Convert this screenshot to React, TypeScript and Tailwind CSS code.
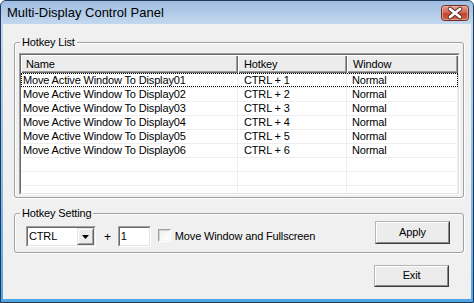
import React from 'react';

// Rows shown in the hotkey list
const rows = [
  { name: 'Move Active Window To Display01', hotkey: 'CTRL + 1', mode: 'Normal' },
  { name: 'Move Active Window To Display02', hotkey: 'CTRL + 2', mode: 'Normal' },
  { name: 'Move Active Window To Display03', hotkey: 'CTRL + 3', mode: 'Normal' },
  { name: 'Move Active Window To Display04', hotkey: 'CTRL + 4', mode: 'Normal' },
  { name: 'Move Active Window To Display05', hotkey: 'CTRL + 5', mode: 'Normal' },
  { name: 'Move Active Window To Display06', hotkey: 'CTRL + 6', mode: 'Normal' },
  { name: '', hotkey: '', mode: '' },
  { name: '', hotkey: '', mode: '' },
  { name: '', hotkey: '', mode: '' },
];

function CloseButton() {
  return (
    <svg width="28" height="16" viewBox="0 0 28 16" className="mt-[4px] shrink-0">
      <defs>
        <linearGradient id="closeRed" x1="0" y1="0" x2="0" y2="1">
          <stop offset="0" stopColor="#e8a493" />
          <stop offset="0.45" stopColor="#d26a55" />
          <stop offset="0.55" stopColor="#c2442c" />
          <stop offset="1" stopColor="#cc6a4f" />
        </linearGradient>
      </defs>
      <rect x="0.5" y="0.5" width="27" height="15" rx="3" fill="url(#closeRed)" stroke="#6b2a22" />
      <rect x="1.5" y="1.5" width="25" height="13" rx="2" fill="none" stroke="#f2c4b8" strokeOpacity="0.6" />
      <path d="M9 4 L19 12 M19 4 L9 12" stroke="#5a2a24" strokeWidth="4.6" strokeLinecap="round" />
      <path d="M9 4 L19 12 M19 4 L9 12" stroke="#ffffff" strokeWidth="2.8" strokeLinecap="round" />
    </svg>
  );
}

// Classic sunken 3D border
function Sunken({ className, children }: { className?: string; children?: React.ReactNode }) {
  return (
    <div className={`border border-t-[#a0a0a0] border-l-[#a0a0a0] border-r-white border-b-white ${className ?? ''}`}>
      <div className="w-full h-full border border-t-[#696969] border-l-[#696969] border-r-[#e3e3e3] border-b-[#e3e3e3] bg-white overflow-hidden">
        {children}
      </div>
    </div>
  );
}

function PushButton({ label, className }: { label: string; className?: string }) {
  return (
    <div className={`w-[75px] border border-t-[#b4b4b4] border-l-[#b4b4b4] border-r-[#3c3c3c] border-b-[#3c3c3c] ${className ?? ''}`}>
      <div className="w-full h-full border border-t-white border-l-white border-r-[#8a8a8a] border-b-[#8a8a8a] bg-[#ececec] flex items-center justify-center pb-[1px]">
        {label}
      </div>
    </div>
  );
}

export default function App() {
  return (
    <div className="w-[474px] h-[303px] bg-white font-['Liberation_Sans',Arial,sans-serif] text-[11px] tracking-[-0.15px] text-black">
      <div className="w-full h-full flex flex-col rounded-t-[6px] border border-[#1e3a58] bg-[#4ea6e6] overflow-hidden">
        {/* Title bar */}
        <div className="h-[23px] shrink-0 flex justify-between bg-gradient-to-b from-[#9fbde1] to-[#c3d8ef] pl-[6px] pr-[4px]">
          <span className="self-center text-[13px] leading-[16px] tracking-normal">Multi-Display Control Panel</span>
          <CloseButton />
        </div>

        {/* Client area */}
        <div className="flex-1 flex px-[2px] pb-[3px] bg-gradient-to-b from-[#c3d8ef] to-[#4ea6e6]">
          <div className="flex-1 bg-[#f0f0f0] pt-[12px]">
            {/* Hotkey List group */}
            <fieldset className="ml-[11px] w-[450px] border border-[#a0a0a0] rounded-[3px] pl-[4px] pb-[2px] shadow-[inset_1px_1px_0_#ffffff,1px_1px_0_#ffffff]">
              <legend className="ml-[1px] px-[2px] leading-[13px] bg-[#f0f0f0]">Hotkey List</legend>
              <Sunken className="mt-[4px] w-[441px] h-[142px]">
                {/* Header */}
                <div className="flex h-[18px] bg-[#ececec]">
                  {[
                    { t: 'Name', w: 'w-[217px]', p: 'pl-[4px]' },
                    { t: 'Hotkey', w: 'w-[109px]', p: 'pl-[5px]' },
                    { t: 'Window', w: 'w-[111px]', p: 'pl-[5px]' },
                  ].map((h) => (
                    <div
                      key={h.t}
                      className={`${h.w} ${h.p} shrink-0 flex items-center border-t border-l border-white shadow-[inset_-1px_-1px_0_#696969,inset_-2px_-2px_0_#a0a0a0]`}
                    >
                      {h.t}
                    </div>
                  ))}
                </div>
                {/* Rows */}
                {rows.map((r, i) => (
                  <div
                    key={i}
                    className={`flex h-[14px] border-t border-[#eeeeee] leading-[13px] ${i === 0 ? 'outline-1 outline-dotted outline-black -outline-offset-1' : ''}`}
                  >
                    <div className="w-[217px] shrink-0 pl-[2px] border-r border-[#eeeeee] whitespace-nowrap">{r.name}</div>
                    <div className="w-[109px] shrink-0 pl-[6px] border-r border-[#eeeeee]">{r.hotkey}</div>
                    <div className="w-[111px] shrink-0 pl-[5px] border-r border-[#eeeeee]">{r.mode}</div>
                  </div>
                ))}
              </Sunken>
            </fieldset>

            {/* Hotkey Setting group */}
            <fieldset className="mt-[9px] ml-[11px] w-[450px] border border-[#a0a0a0] rounded-[3px] pl-[4px] pb-[5px] shadow-[inset_1px_1px_0_#ffffff,1px_1px_0_#ffffff]">
              <legend className="ml-[1px] px-[2px] leading-[13px] bg-[#f0f0f0]">Hotkey Setting</legend>
              <div className="flex items-start pt-[1px] pl-[7px]">
                <Sunken className="mt-[5px] w-[70px] h-[21px]">
                  <div className="flex h-full items-center">
                    <span className="flex-1 pl-[1px]">CTRL</span>
                    <div className="w-[17px] h-full border border-t-[#e3e3e3] border-l-[#e3e3e3] border-r-[#696969] border-b-[#696969]">
                      <div className="w-full h-full border border-t-white border-l-white border-r-[#a0a0a0] border-b-[#a0a0a0] bg-[#ececec] flex items-center justify-center">
                        <svg width="7" height="4" viewBox="0 0 7 4">
                          <path d="M0 0 H7 L3.5 4 Z" fill="#000" />
                        </svg>
                      </div>
                    </div>
                  </div>
                </Sunken>
                <span className="mt-[5px] h-[21px] ml-[8px] flex items-center text-[12px]">+</span>
                <Sunken className="mt-[5px] ml-[7px] w-[33px] h-[21px]">
                  <div className="h-full flex items-center pl-[1px]">1</div>
                </Sunken>
                <div className="mt-[8px] ml-[7px] w-[13px] h-[13px] border border-t-[#a0a0a0] border-l-[#a0a0a0] border-r-white border-b-white">
                  <div className="w-full h-full border border-t-[#d0d0d0] border-l-[#d0d0d0] border-r-[#f4f4f4] border-b-[#f4f4f4] bg-gradient-to-br from-[#f0f0f0] to-white" />
                </div>
                <span className="mt-[5px] h-[21px] ml-[4px] flex items-center">Move Window and Fullscreen</span>
                <PushButton label="Apply" className="ml-auto mr-[13px] h-[23px]" />
              </div>
            </fieldset>

            <PushButton label="Exit" className="mt-[12px] ml-[371px] h-[22px]" />
          </div>
        </div>
      </div>
    </div>
  );
}
